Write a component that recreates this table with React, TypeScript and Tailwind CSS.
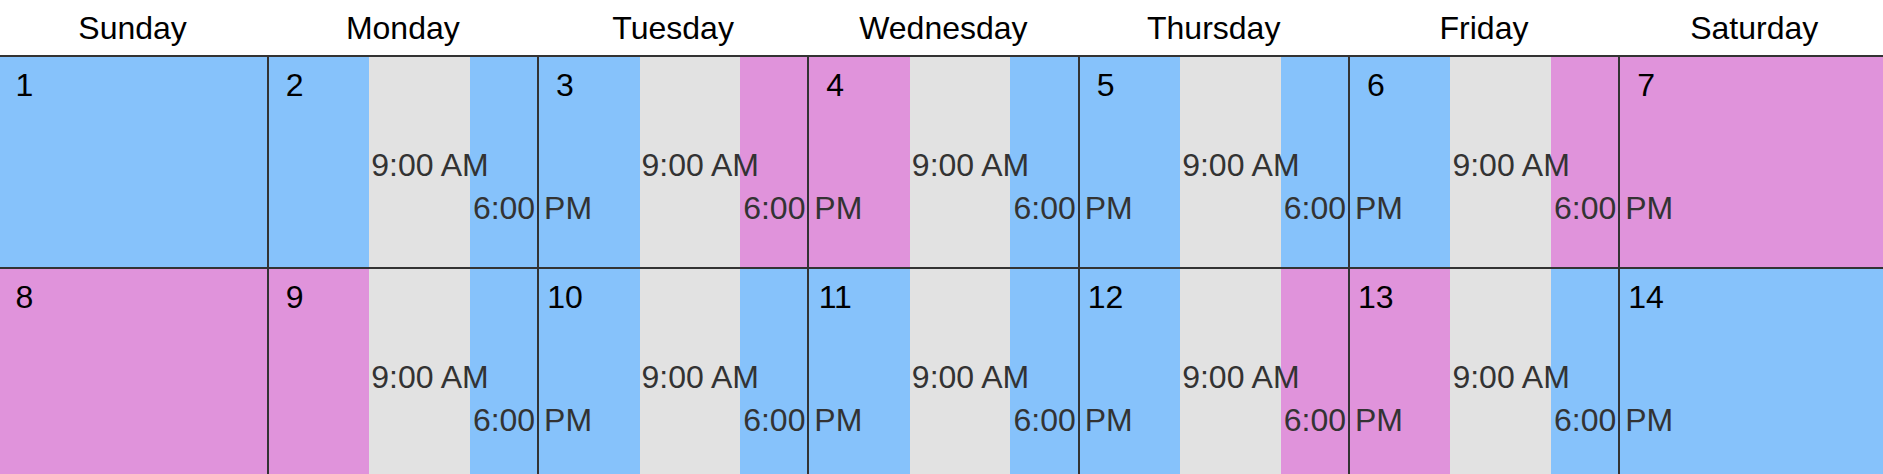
type Tone = 'blue' | 'pink'

const toneBg: Record<Tone, string> = {
  blue: 'bg-[#86c2fb]',
  pink: 'bg-[#e093db]',
}

type Day = {
  date: number
  before: Tone
  // weekend days have no working hours, so no "after" part
  after?: Tone
}

const dayNames = [
  'Sunday',
  'Monday',
  'Tuesday',
  'Wednesday',
  'Thursday',
  'Friday',
  'Saturday',
]

const weeks: Day[][] = [
  [
    { date: 1, before: 'blue' },
    { date: 2, before: 'blue', after: 'blue' },
    { date: 3, before: 'blue', after: 'pink' },
    { date: 4, before: 'pink', after: 'blue' },
    { date: 5, before: 'blue', after: 'blue' },
    { date: 6, before: 'blue', after: 'pink' },
    { date: 7, before: 'pink' },
  ],
  [
    { date: 8, before: 'pink' },
    { date: 9, before: 'pink', after: 'blue' },
    { date: 10, before: 'blue', after: 'blue' },
    { date: 11, before: 'blue', after: 'blue' },
    { date: 12, before: 'blue', after: 'pink' },
    { date: 13, before: 'pink', after: 'blue' },
    { date: 14, before: 'blue' },
  ],
]

function DayCell({ day }: { day: Day }) {
  return (
    <div className="flex h-[212px] border border-[#333]">
      <div
        className={`${day.after ? 'w-[37.5%]' : 'flex-1'} min-w-0 ${toneBg[day.before]} pt-[10px] text-black`}
      >
        <div className="w-[52px] text-center">{day.date}</div>
      </div>
      {day.after && (
        <>
          <div className="w-[37.5%] min-w-0 bg-[#e2e2e2] pl-[2px] pt-[90px]">
            <span className="relative z-10 whitespace-nowrap text-[#333]">
              9:00 AM
            </span>
          </div>
          <div
            className={`min-w-0 flex-1 ${toneBg[day.after]} pl-[3px] pt-[133px]`}
          >
            <span className="relative z-10 whitespace-nowrap text-[#333]">
              6:00 PM
            </span>
          </div>
        </>
      )}
    </div>
  )
}

export default function App() {
  return (
    <div className="h-[474px] w-full overflow-hidden bg-white font-['Liberation_Sans',Arial,sans-serif] text-[32px] leading-[37px]">
      <div className="ml-[-2.6px] w-[1892px]">
        <div className="grid h-[56px] grid-cols-7 border-b border-[#333]">
          {dayNames.map((name) => (
            <div key={name} className="pt-[10px] text-center text-black">
              {name}
            </div>
          ))}
        </div>
        {weeks.map((week, i) => (
          <div key={i} className="grid grid-cols-7">
            {week.map((day) => (
              <DayCell key={day.date} day={day} />
            ))}
          </div>
        ))}
      </div>
    </div>
  )
}
